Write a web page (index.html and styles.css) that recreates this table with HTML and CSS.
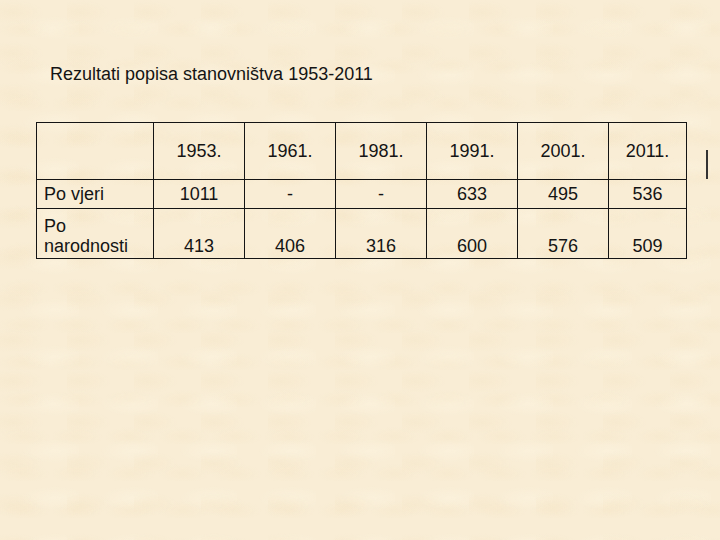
FILE: index.html
```html
<!DOCTYPE html>
<html>
<head>
<meta charset="utf-8">
<link rel="stylesheet" href="styles.css">
</head>
<body>
<div class="slide">
  <h1 class="title">Rezultati popisa stanovništva 1953-2011</h1>
  <div class="content">
    <table class="census">
      <colgroup>
        <col class="c-label">
        <col class="c-year">
        <col class="c-year">
        <col class="c-year">
        <col class="c-year">
        <col class="c-year">
        <col class="c-last">
      </colgroup>
      <tr class="r-head">
        <td></td>
        <td>1953.</td>
        <td>1961.</td>
        <td>1981.</td>
        <td>1991.</td>
        <td>2001.</td>
        <td>2011.</td>
      </tr>
      <tr class="r-one">
        <td class="label">Po vjeri</td>
        <td>1011</td>
        <td>-</td>
        <td>-</td>
        <td>633</td>
        <td>495</td>
        <td>536</td>
      </tr>
      <tr class="r-two">
        <td class="label">Po<br>narodnosti</td>
        <td>413</td>
        <td>406</td>
        <td>316</td>
        <td>600</td>
        <td>576</td>
        <td>509</td>
      </tr>
    </table>
    <div class="cursor"></div>
  </div>
</div>
</body>
</html>
```
FILE: styles.css
```css
html, body {
  margin: 0;
  padding: 0;
}
body {
  width: 720px;
  height: 540px;
  overflow: hidden;
  background-color: #f9edd5;
  background-image:
    radial-gradient(ellipse 30px 12px at 20% 30%, rgba(242,224,188,0.25), transparent),
    radial-gradient(ellipse 34px 12px at 70% 60%, rgba(255,249,232,0.3), transparent),
    radial-gradient(ellipse 26px 10px at 45% 80%, rgba(242,224,188,0.22), transparent);
  background-size: 67px 41px, 79px 47px, 53px 37px;
  font-family: "Liberation Sans", Arial, sans-serif;
  color: #141414;
}
.slide {
  padding: 64px 0 0 36px;
}
.title {
  margin: 0 0 38px 14px;
  font-size: 18px;
  font-weight: normal;
  line-height: 20px;
}
.content {
  display: flex;
  align-items: flex-start;
}
.census {
  border-collapse: collapse;
  table-layout: fixed;
  width: 650px;
  font-size: 18px;
  line-height: 20px;
}
.c-label { width: 117px; }
.c-year { width: 91px; }
.c-last { width: 78px; }
.census td {
  border: 1px solid #141414;
  padding: 0 7px;
  text-align: center;
  vertical-align: middle;
}
.census td.label {
  text-align: left;
}
.r-head td { height: 56px; }
.r-one td { height: 28px; }
.r-two td {
  height: 47px;
  vertical-align: bottom;
  padding-bottom: 2px;
}
.cursor {
  width: 2px;
  height: 29px;
  margin: 28px 0 0 19px;
  background: #333;
}
```
